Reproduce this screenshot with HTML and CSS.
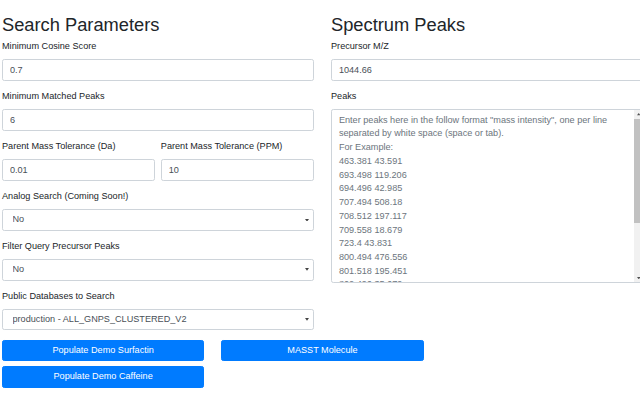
FILE: index.html
```html
<!DOCTYPE html>
<html lang="en">
<head>
<meta charset="utf-8">
<title>MASST Search</title>
<link rel="stylesheet" href="styles.css">
</head>
<body>
<div class="page">
  <div class="cols">
    <section class="col">
      <h2 class="title">Search Parameters</h2>
      <div class="group">
        <label class="label">Minimum Cosine Score</label>
        <input class="control" type="text" value="0.7">
      </div>
      <div class="group">
        <label class="label">Minimum Matched Peaks</label>
        <input class="control" type="text" value="6">
      </div>
      <div class="group pair">
        <div>
          <label class="label">Parent Mass Tolerance (Da)</label>
          <input class="control" type="text" value="0.01">
        </div>
        <div>
          <label class="label">Parent Mass Tolerance (PPM)</label>
          <input class="control" type="text" value="10">
        </div>
      </div>
      <div class="group">
        <label class="label">Analog Search (Coming Soon!)</label>
        <div class="select-wrap">
          <select class="control select"><option>No</option></select>
          <svg class="caret" viewBox="0 0 6 4"><path d="M0 0h6L3 4z"/></svg>
        </div>
      </div>
      <div class="group">
        <label class="label">Filter Query Precursor Peaks</label>
        <div class="select-wrap">
          <select class="control select"><option>No</option></select>
          <svg class="caret" viewBox="0 0 6 4"><path d="M0 0h6L3 4z"/></svg>
        </div>
      </div>
      <div class="group">
        <label class="label">Public Databases to Search</label>
        <div class="select-wrap">
          <select class="control select"><option>production - ALL_GNPS_CLUSTERED_V2</option></select>
          <svg class="caret" viewBox="0 0 6 4"><path d="M0 0h6L3 4z"/></svg>
        </div>
      </div>
    </section>
    <section class="col">
      <h2 class="title">Spectrum Peaks</h2>
      <div class="group">
        <label class="label">Precursor M/Z</label>
        <input class="control" type="text" value="1044.66">
      </div>
      <div class="group">
        <label class="label">Peaks</label>
        <div class="peaks-wrap">
          <textarea class="control peaks" rows="12">Enter peaks here in the follow format "mass intensity", one per line separated by white space (space or tab).
For Example:
463.381 43.591
693.498 119.206
694.496 42.985
707.494 508.18
708.512 197.117
709.558 18.679
723.4 43.831
800.494 476.556
801.518 195.451
802.496 35.679
1004.628 70.155
1005.632 34.821
1022.644 52.764
1044.666 12.530</textarea>
          <div class="scrollbar" aria-hidden="true">
            <div class="sb-btn"><svg viewBox="0 0 6 4"><path d="M3 0L6 4H0z"/></svg></div>
            <div class="sb-track"><div class="sb-thumb"></div></div>
            <div class="sb-btn"><svg viewBox="0 0 6 4"><path d="M0 0h6L3 4z"/></svg></div>
          </div>
        </div>
      </div>
    </section>
  </div>
  <div class="buttons">
    <div class="btn-col">
      <button class="btn">Populate Demo Surfactin</button>
      <button class="btn">Populate Demo Caffeine</button>
    </div>
    <div class="btn-col">
      <button class="btn">MASST Molecule</button>
    </div>
  </div>
</div>
</body>
</html>
```
FILE: styles.css
```css
html, body {
  margin: 0;
  padding: 0;
  overflow: hidden;
  background: #fff;
}
body {
  font-family: "Liberation Sans", Arial, sans-serif;
  font-size: 9.15px;
  line-height: 13.73px;
  color: #212529;
}
.page {
  padding: 13.8px 0 0 2px;
  width: 660px;
}
.cols {
  display: grid;
  grid-template-columns: 312px 314px;
  column-gap: 17px;
}
.title {
  font-size: 18.3px;
  line-height: 22px;
  font-weight: 400;
  margin: 0 0 4.6px 0;
  color: #212529;
}
.group {
  margin-bottom: 9.15px;
}
.label {
  display: block;
  margin-bottom: 5.3px;
}
.control {
  display: block;
  box-sizing: border-box;
  width: 100%;
  height: 21.7px;
  padding: 3.4px 6.9px;
  font-family: inherit;
  font-size: 9.15px;
  line-height: 13.73px;
  color: #495057;
  background: #fff;
  border: 1px solid #ced4da;
  border-radius: 2.3px;
  margin: 0;
  outline: none;
}
.pair {
  display: grid;
  grid-template-columns: 1fr 1fr;
  column-gap: 5.7px;
}
.select-wrap {
  position: relative;
}
.select {
  -webkit-appearance: none;
  appearance: none;
  padding-left: 9.5px;
  padding-right: 16px;
}
.caret {
  position: absolute;
  right: 5.5px;
  top: 9.5px;
  width: 4px;
  height: 2.7px;
  fill: #444;
}
.peaks-wrap {
  position: relative;
}
.peaks {
  height: 174px;
  resize: none;
  color: #6c757d;
  overflow: hidden;
  padding: 3.4px 16.6px 3.4px 6.9px;
}
.scrollbar {
  position: absolute;
  top: 1px;
  right: 1px;
  bottom: 1px;
  width: 9.7px;
  display: flex;
  flex-direction: column;
  background: #f1f1f1;
}
.sb-btn {
  height: 8.5px;
  display: flex;
  align-items: center;
  justify-content: center;
}
.sb-btn svg {
  width: 3.5px;
  height: 2.4px;
  fill: #505050;
}
.sb-track {
  flex: 1;
}
.sb-thumb {
  height: 104px;
  background: #c1c1c1;
}
.buttons {
  display: grid;
  grid-template-columns: 202.3px 202.3px;
  column-gap: 17px;
}
.btn-col {
  display: flex;
  flex-direction: column;
  gap: 4.6px;
}
.btn {
  display: block;
  width: 100%;
  height: 21.7px;
  padding: 0;
  font-family: inherit;
  font-size: 9.15px;
  line-height: 13.73px;
  color: #fff;
  background: #007bff;
  border: 1px solid #007bff;
  border-radius: 2.3px;
  text-align: center;
}
```
